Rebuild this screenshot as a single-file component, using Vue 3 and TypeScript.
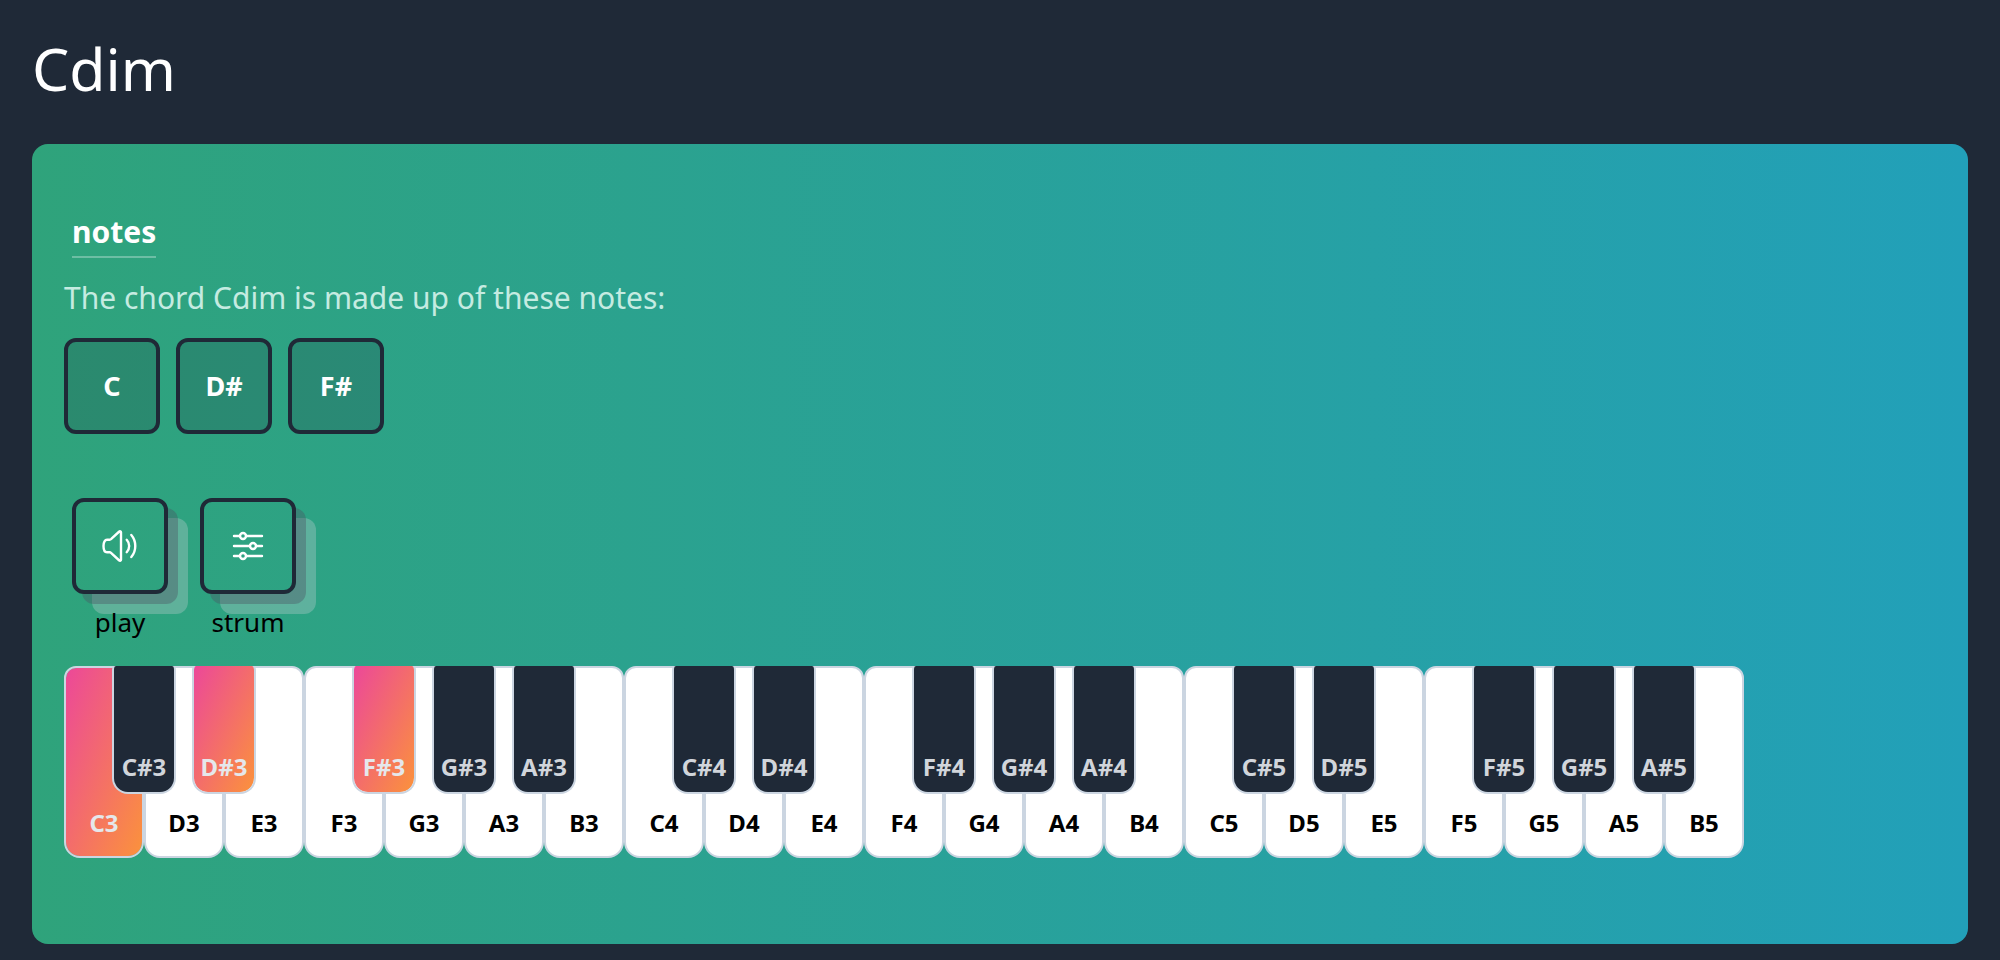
<script setup lang="ts">
interface Key {
  name: string
  black: boolean
}

const chord = 'Cdim'
const chordNotes: string[] = ['C', 'D#', 'F#']
const pressed = new Set<string>(['C3', 'D#3', 'F#3'])

const scale: string[] = ['C', 'C#', 'D', 'D#', 'E', 'F', 'F#', 'G', 'G#', 'A', 'A#', 'B']
const keys: Key[] = [3, 4, 5].flatMap((octave) =>
  scale.map((note) => ({ name: `${note}${octave}`, black: note.includes('#') })),
)
</script>

<template>
  <main class="page">
    <h1 class="title">{{ chord }}</h1>

    <section class="panel">
      <h2 class="heading">notes</h2>
      <p class="lead">The chord {{ chord }} is made up of these notes:</p>

      <ul class="notes">
        <li v-for="note in chordNotes" :key="note" class="note">{{ note }}</li>
      </ul>

      <div class="actions">
        <div class="action">
          <button id="play" class="action-button" type="button" aria-labelledby="play-label">
            <svg class="icon" viewBox="0 0 40 40" aria-hidden="true">
              <path d="M21 6.200v27.600a1 1 0 0 1-1.700.700L11 26.800a2 2 0 0 0-1.400-.500H7c-2 0-3.500-2.400-3.500-6.300S5 13.700 7 13.700h2.600a2 2 0 0 0 1.400-.500l8.300-7.700a1 1 0 0 1 1.700.700z" />
              <path d="M26.700 13.800c3.300 3.600 3.300 8.800 0 12.400" />
              <path d="M31.300 9c5.300 6.200 5.300 15.800 0 22" />
            </svg>
          </button>
          <label id="play-label" for="play">play</label>
        </div>
        <div class="action">
          <button id="strum" class="action-button" type="button" aria-labelledby="strum-label">
            <svg class="icon" viewBox="0 0 40 40" aria-hidden="true">
              <path d="M6 10h6M18 10h16M6 20h16M28 20h6M6 30h6M18 30h16" />
              <circle cx="15" cy="10" r="3" />
              <circle cx="25" cy="20" r="3" />
              <circle cx="15" cy="30" r="3" />
            </svg>
          </button>
          <label id="strum-label" for="strum">strum</label>
        </div>
      </div>

      <div class="keyboard">
        <button
          v-for="key in keys"
          :key="key.name"
          type="button"
          class="key"
          :class="[key.black ? 'black' : 'white', { pressed: pressed.has(key.name) }]"
        >
          {{ key.name }}
        </button>
      </div>
    </section>
  </main>
</template>

<style>
body {
  margin: 0;
  background: #1f2937;
}
</style>

<style scoped>
.page {
  box-sizing: border-box;
  min-height: 100vh;
  padding: 32px 32px 16px;
  font-family: "Noto Sans", "Open Sans", sans-serif;
  color: #fff;
}

.title {
  margin: 0 0 40px;
  font-size: 59px;
  line-height: 72px;
  font-weight: 400;
}

.panel {
  padding: 64px 32px 86px;
  border-radius: 16px;
  background: linear-gradient(to right, #2fa37b, #22a0b9);
}

.heading {
  width: fit-content;
  margin: 0 0 16px 8px;
  border-bottom: 2px solid rgba(255, 255, 255, 0.3);
  font-size: 30px;
  line-height: 48px;
  font-weight: 700;
}

.lead {
  margin: 0 0 16px;
  font-size: 30px;
  line-height: 48px;
  color: #c5ebe1;
}

.notes {
  display: flex;
  flex-wrap: wrap;
  gap: 16px;
  margin: 0;
  padding: 0;
  list-style: none;
}

.note,
.action-button {
  box-sizing: border-box;
  display: flex;
  align-items: center;
  justify-content: center;
  width: 96px;
  height: 96px;
  border: 4px solid #1f2937;
  border-radius: 12px;
}

.note {
  background: rgba(31, 41, 55, 0.2);
  font-size: 27px;
  line-height: 36px;
  font-weight: 700;
}

.actions {
  display: flex;
  gap: 32px;
  margin: 64px 8px 24px;
}

.action {
  display: flex;
  flex-direction: column;
  align-items: center;
  width: 96px;
  gap: 8px;
  font-size: 26px;
  line-height: 40px;
  color: #000;
}

.action label {
  position: relative;
}

.action-button {
  padding: 0;
  background: transparent;
  box-shadow:
    10px 10px rgba(75, 85, 99, 0.4),
    20px 20px rgba(209, 213, 219, 0.3);
}

.icon {
  width: 40px;
  height: 40px;
  fill: none;
  stroke: #fff;
  stroke-width: 2.400;
  stroke-linecap: round;
  stroke-linejoin: round;
}

.keyboard {
  display: flex;
}

.key {
  box-sizing: border-box;
  display: flex;
  flex: none;
  align-items: flex-end;
  justify-content: center;
  border: 2px solid #cbd5e1;
  font: 700 24px/34px "Noto Sans", "Open Sans", sans-serif;
}

.white {
  width: 80px;
  height: 192px;
  padding: 0 0 16px;
  border-radius: 12px 12px 16px 16px;
  background: #fff;
  color: #000;
}

.black {
  z-index: 1;
  width: 64px;
  height: 128px;
  margin: 0 -32px;
  padding: 0 0 8px;
  border-top: 0;
  border-radius: 4px 4px 16px 16px;
  background: #1f2937;
  color: #d1d5db;
}

.pressed {
  background: linear-gradient(to bottom right, #ec4899, #fb923c) padding-box;
  color: #e5e7eb;
}
</style>
